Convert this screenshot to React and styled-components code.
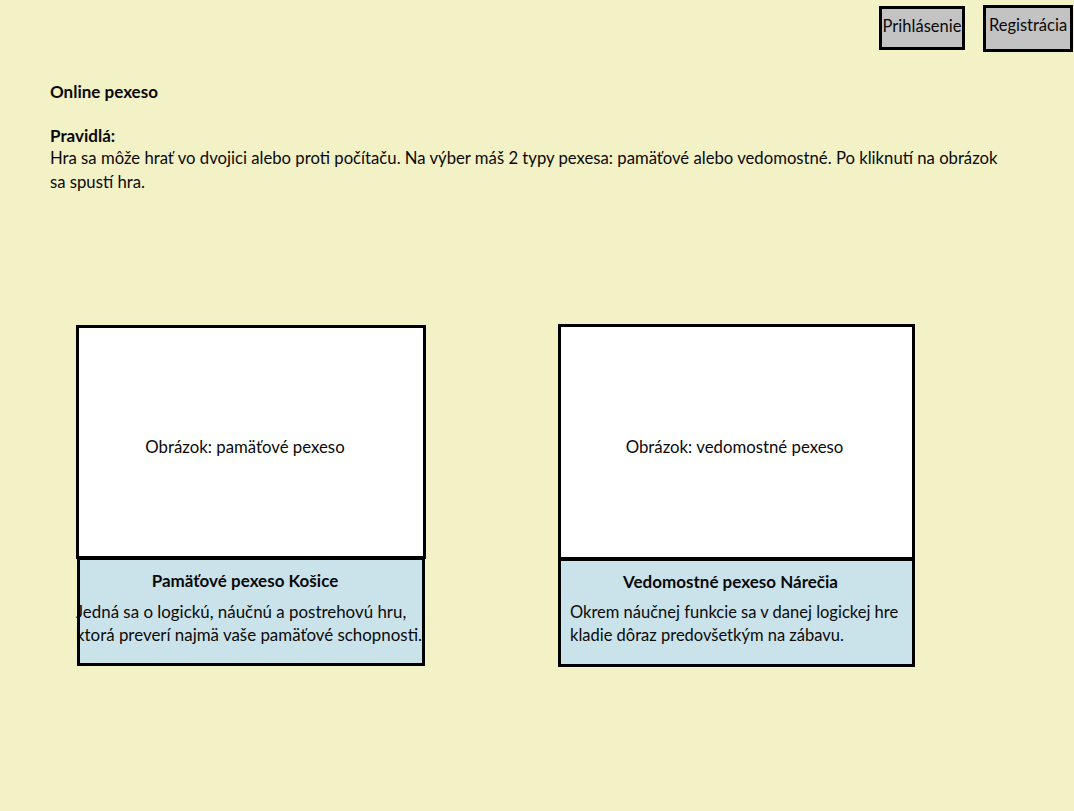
import React from "react";
import styled, { createGlobalStyle } from "styled-components";

const GlobalStyle = createGlobalStyle`
  html, body {
    margin: 0;
    padding: 0;
    background: #f3f1c6;
  }
  body {
    font-family: Lato, "Open Sans", sans-serif;
    font-size: 17px;
    color: #0a0a0a;
  }
`;

const Page = styled.div`
  min-height: 811px;
  background: #f3f1c6;
`;

const TopBar = styled.div`
  display: flex;
  justify-content: flex-end;
  align-items: flex-start;
  gap: 18px;
  padding: 5px 1px 0 0;
`;

const AuthButton = styled.button`
  box-sizing: border-box;
  width: ${(p) => p.w}px;
  height: ${(p) => p.h}px;
  margin-top: ${(p) => p.top || 0}px;
  background: #c3c3c3;
  border: 3px solid #000;
  padding: 7px 0 0;
  font-family: inherit;
  font-size: 16.5px;
  color: #0a0a0a;
  display: flex;
  justify-content: center;
  align-items: flex-start;
  white-space: nowrap;
  cursor: pointer;
`;

const Intro = styled.div`
  padding: 30px 0 0 50px;
  width: 965px;
`;

const Title = styled.div`
  font-weight: bold;
  font-size: 17px;
  line-height: 20px;
`;

const RulesTitle = styled(Title)`
  margin-top: 24px;
`;

const Rules = styled.p`
  margin: 0;
  font-size: 16.7px;
  line-height: 24px;
`;

const CardRow = styled.div`
  display: flex;
  align-items: flex-start;
  gap: 132px;
  padding: 131px 0 0 76px;
`;

const Card = styled.div`
  width: ${(p) => p.w}px;
  margin-top: ${(p) => p.lift || 0}px;
  display: flex;
  flex-direction: column;
`;

const Picture = styled.div`
  box-sizing: border-box;
  height: ${(p) => p.h}px;
  background: #fff;
  border: 3px solid #000;
  display: flex;
  align-items: center;
  justify-content: center;
  font-size: 16.8px;
  padding: 8px ${(p) => p.shift || 0}px 0 0;
`;

const Info = styled.div`
  position: relative;
  box-sizing: border-box;
  height: ${(p) => p.h}px;
  margin: -2px ${(p) => p.inset || 0}px 0;
  background: #cae3ea;
  padding: 14px 3px 0;

  &::after {
    content: "";
    position: absolute;
    inset: 0;
    border: 3px solid #000;
    pointer-events: none;
  }
`;

const InfoTitle = styled.div`
  font-weight: bold;
  font-size: 17px;
  text-align: center;
  line-height: 20px;
  padding-right: 12px;
`;

const InfoText = styled.p`
  margin: 9px 0 0 ${(p) => p.indent}px;
  font-size: ${(p) => p.size}px;
  line-height: 23px;
  white-space: nowrap;
`;

const App = () => {
  return (
    <Page>
      <GlobalStyle />
      <TopBar>
        <AuthButton w={86} h={44} top={1}>
          Prihlásenie
        </AuthButton>
        <AuthButton w={90} h={47}>
          Registrácia
        </AuthButton>
      </TopBar>

      <Intro>
        <Title>Online pexeso</Title>
        <RulesTitle>Pravidlá:</RulesTitle>
        <Rules>
          Hra sa môže hrať vo dvojici alebo proti počítaču. Na výber máš 2 typy
          pexesa: pamäťové alebo vedomostné. Po kliknutí na obrázok sa spustí
          hra.
        </Rules>
      </Intro>

      <CardRow>
        <Card w={350}>
          <Picture h={234} shift={12}>
            Obrázok: pamäťové pexeso
          </Picture>
          <Info h={109} inset={1}>
            <InfoTitle>Pamäťové pexeso Košice</InfoTitle>
            <InfoText indent={-4} size={16.9}>
              Jedná sa o logickú, náučnú a postrehovú hru,
              <br />
              ktorá preverí najmä vaše pamäťové schopnosti.
            </InfoText>
          </Info>
        </Card>
        <Card w={357} lift={-1}>
          <Picture h={236} shift={4}>
            Obrázok: vedomostné pexeso
          </Picture>
          <Info h={109}>
            <InfoTitle>Vedomostné pexeso Nárečia</InfoTitle>
            <InfoText indent={9} size={16.5}>
              Okrem náučnej funkcie sa v danej logickej hre
              <br />
              kladie dôraz predovšetkým na zábavu.
            </InfoText>
          </Info>
        </Card>
      </CardRow>
    </Page>
  );
};

export default App;
